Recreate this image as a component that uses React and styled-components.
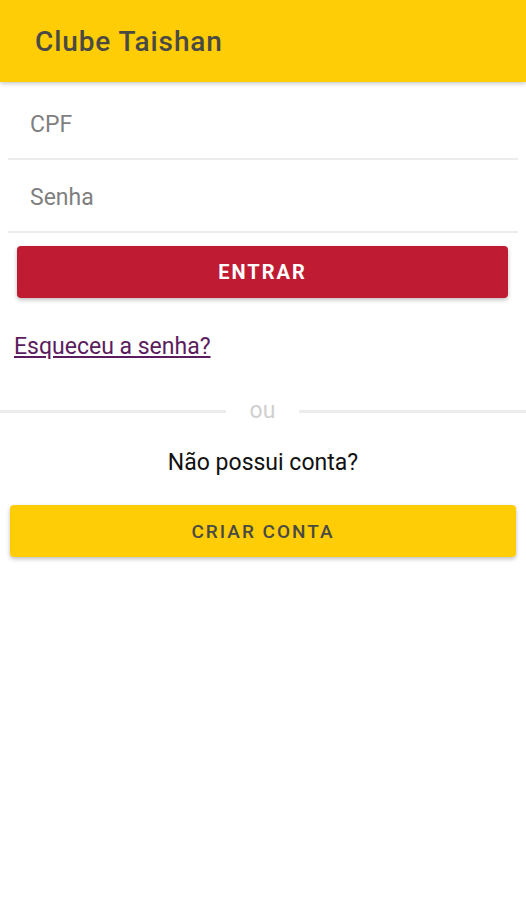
import React from "react";
import styled, { createGlobalStyle } from "styled-components";

const GlobalStyle = createGlobalStyle`
  html, body {
    margin: 0;
    padding: 0;
    background: #fff;
    font-family: Roboto, "Liberation Sans", sans-serif;
  }
`;

function App() {
  return (
    <Page>
      <GlobalStyle />
      <Header>
        <h1>Clube Taishan</h1>
      </Header>
      <Form>
        <Field placeholder="CPF" />
        <Field placeholder="Senha" type="password" />
        <Button variant="primary">Entrar</Button>
      </Form>
      <Forgot href="#">Esqueceu a senha?</Forgot>
      <Divider>
        <span>ou</span>
      </Divider>
      <Question>Não possui conta?</Question>
      <Bottom>
        <Button variant="secondary">Criar conta</Button>
      </Bottom>
    </Page>
  );
}

const Page = styled.div`
  width: 526px;
  min-height: 900px;
  background: #fff;
`;

const Header = styled.header`
  height: 82px;
  background: #fecd06;
  display: flex;
  align-items: center;
  padding: 0 35px;
  box-shadow: 0 2px 4px rgba(0, 0, 0, 0.2);
  h1 {
    margin: 0;
    font-size: 28px;
    font-weight: 500;
    color: #4a4a44;
    letter-spacing: 0.9px;
  }
`;

const Form = styled.div`
  display: flex;
  flex-direction: column;
  padding: 0 8px;
  margin-top: 5px;
`;

const Field = styled.input`
  box-sizing: border-box;
  height: 73px;
  border: none;
  border-bottom: 2px solid #ececec;
  padding: 4px 22px 0;
  font-family: inherit;
  font-size: 23px;
  color: #333;
  outline: none;
  background: transparent;
  &::placeholder {
    color: #7f7f7f;
  }
`;

const Button = styled.button`
  width: 100%;
  height: 52px;
  border: none;
  border-radius: 4px;
  font-family: inherit;
  font-size: 19px;
  font-weight: 500;
  text-transform: uppercase;
  letter-spacing: 2px;
  box-shadow: 0 2px 4px rgba(0, 0, 0, 0.25);
  background: ${(p) => (p.variant === "primary" ? "#bf1b33" : "#fecd06")};
  color: ${(p) => (p.variant === "primary" ? "#fff" : "#4a4a44")};
  ${(p) =>
    p.variant === "primary" &&
    `
    width: auto;
    margin: 13px 10px 0 9px;
    font-weight: 700;
    font-size: 20px;
  `}
`;

const Forgot = styled.a`
  display: block;
  width: fit-content;
  margin: 35px 0 0 14px;
  font-size: 23px;
  line-height: 28px;
  color: #5b1c5e;
  text-decoration: underline;
`;

const Divider = styled.div`
  display: flex;
  align-items: center;
  height: 24px;
  margin-top: 38px;
  &::before,
  &::after {
    content: "";
    height: 3px;
    background: #ececec;
  }
  &::before {
    width: 226px;
  }
  &::after {
    flex: 1;
  }
  span {
    width: 73px;
    text-align: center;
    font-size: 23px;
    color: #cfcfcf;
    line-height: 24px;
  }
`;

const Question = styled.p`
  margin: 26px 0 0;
  text-align: center;
  font-size: 23px;
  line-height: 28px;
  color: #111;
`;

const Bottom = styled.div`
  padding: 0 10px;
  margin-top: 28px;
`;

export default App;
